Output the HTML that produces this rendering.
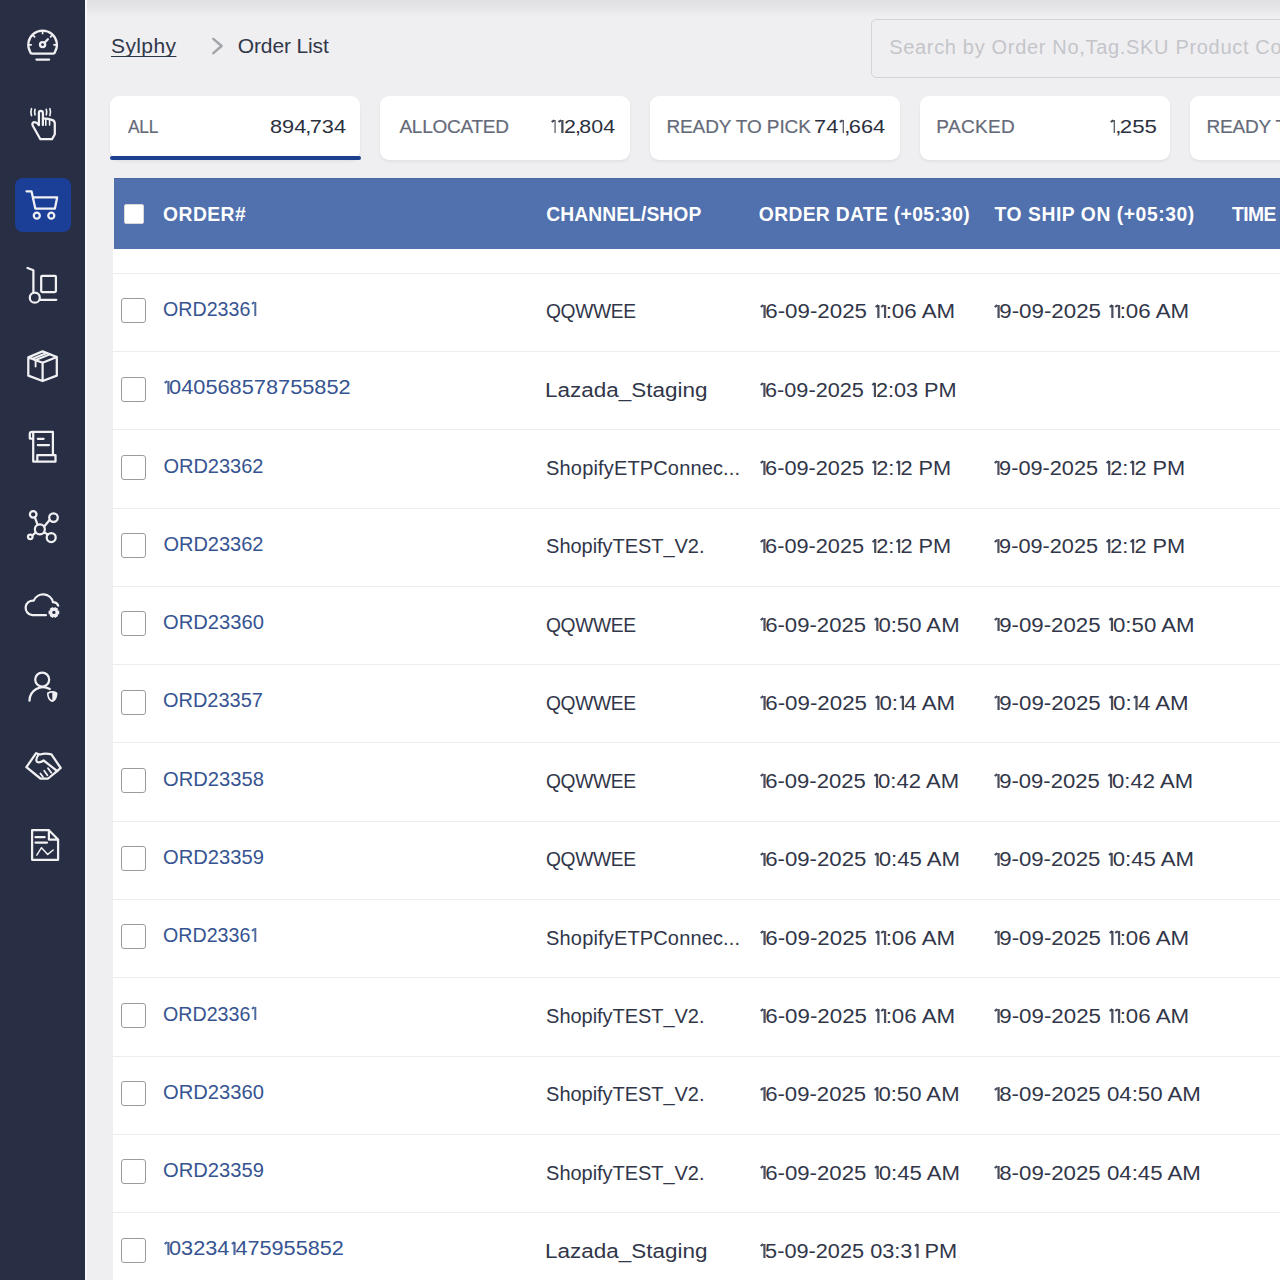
<!DOCTYPE html><html><head><meta charset="utf-8"><style>*{box-sizing:border-box;margin:0;padding:0}
html,body{width:1280px;height:1280px;overflow:hidden}
body{background:#efeff1;font-family:"Liberation Sans",sans-serif;position:relative}
.t{position:absolute;white-space:pre;transform-origin:0 0}
.abs{position:absolute}
.sb{position:absolute;left:0;top:0;width:85px;height:1280px;background:#282e43}
.sbedge{position:absolute;left:85px;top:0;width:2px;height:1280px;background:#f7f8fc}
.topshade{position:absolute;left:87px;top:0;width:1193px;height:17px;background:linear-gradient(#e1e1e3 0,#e2e2e4 4px,#efeff1 17px)}
.navact{position:absolute;left:14.5px;top:178px;width:56.5px;height:54px;border-radius:8px;background:#1b3e97}
.search{position:absolute;left:871px;top:19px;width:460px;height:59px;border:1.5px solid #d3d4d8;border-radius:5px}
.card{position:absolute;top:96px;width:250px;height:64px;background:#fff;border-radius:9px;box-shadow:0 1.5px 3px rgba(20,25,40,0.06)}
.tabbar{position:absolute;left:110px;top:155.5px;width:251px;height:4.5px;background:#1c3f8f;border-radius:3px}
.tbody{position:absolute;left:113px;top:249px;width:1167px;height:1031px;background:#fff}
.thead{position:absolute;left:114px;top:178px;width:1166px;height:71px;background:#5070ae;border-top:1px solid #4966a6}
.hcb{position:absolute;left:124px;top:204px;width:20px;height:19.5px;background:#fff;border-radius:2px;border:1px solid #d9d9d9}
.sep{position:absolute;left:113px;width:1167px;height:1px;background:#ededf0}
.cb{position:absolute;left:121px;width:25px;height:25px;border:1.5px solid #9b9b9b;border-radius:3px;background:#fff}
.cm{margin:0 -1.3px 0 -1px}.o{display:inline-block;white-space:pre;position:relative;-webkit-text-fill-color:transparent;-webkit-text-stroke:0 transparent;overflow:visible;vertical-align:baseline}.o::before{content:"";position:absolute;left:0.19em;top:0.1585em;width:0.09em;height:0.688em;background:currentColor;opacity:.88}.o::after{content:"";position:absolute;left:0.17em;top:0.166em;width:0.08em;height:0.17em;background:currentColor;transform:rotate(52deg);transform-origin:50% 0;opacity:.9}</style></head><body><div class="sb"></div><div class="sbedge"></div><div class="topshade"></div><div class="navact"></div><svg class="abs" style="left:0;top:0" width="85" height="900" viewBox="0 0 85 900" fill="none" stroke="#f1f1f4" stroke-width="2.25" stroke-linecap="round" stroke-linejoin="round">
<path d="M32.3 53.6 Q30.4 53.5 30.3 52.1 A14.3 14.3 0 1 1 54.9 52.1 Q54.8 53.5 52.9 53.6 Z"/>
<path d="M36.4 59.6 H49.1"/>
<circle cx="42.6" cy="44.6" r="2.6"/>
<path d="M44.5 42.7 L47.9 39.3"/>
<path d="M42.6 31.6 V33.4 M29.4 44.8 H31.2 M54 44.8 H55.8 M33.4 35.6 L34.6 36.8 M51.8 35.6 L50.6 36.8" stroke-width="1.8"/>
<path d="M38.9 125 V112.9 A2 2 0 0 1 42.9 112.9 V125"/>
<path d="M42.9 118.4 Q48.5 118.4 52.6 120.1 Q54.8 121 54.8 123.5 V134.3 L52 139.2 H40.4 L32.8 125.8 Q31.6 123.2 33.6 122.4 Q35.8 121.6 38.9 125"/>
<path d="M45.8 119 V125.2 M49.6 119.4 V125" stroke-width="1.6"/>
<path d="M31.5 108.7 Q30.2 112.1 31.5 115.5 M35 109.4 Q34.1 112.1 35 114.8 M46.3 109.4 Q47.2 112.1 46.3 114.8 M49.9 108.7 Q51.2 112.1 49.9 115.5" stroke-width="1.7"/>
<path d="M26.5 191.3 H31.5 L35.3 208.6 H54.9 L57.2 197.3 H33"/>
<circle cx="36.8" cy="215.7" r="3"/>
<circle cx="51.3" cy="215.7" r="3"/>
<path d="M27.5 268 L33.4 270.2 V292"/>
<circle cx="34.8" cy="297.7" r="5"/>
<path d="M40 299.8 H56.3"/>
<rect x="41.2" y="275.8" width="14.7" height="16.2" rx="1"/>
<path d="M42.6 351.4 L56.8 357 V375.6 L42.6 381 L28.3 375.6 V357.4 Z M28.3 357.4 L42.6 362.7 L56.8 357 M42.6 362.7 V381"/>
<path d="M32.6 358.6 L46.8 353 M35.6 360 L49.9 354.3 M35.6 360 V366.5" stroke-width="1.9"/>
<path d="M33.2 438.5 H29.8 V434 A2.2 2.2 0 0 1 32 431.8 H52.9 V454.5 M33.2 432 V461.5 H55.5 V455.2 H37.3 V461.5"/>
<path d="M37.8 438.8 H43.6 M37.8 445 H49"/>
<circle cx="39.85" cy="529.3" r="5"/>
<circle cx="33.2" cy="514.3" r="3.3"/>
<circle cx="53.5" cy="517.6" r="4.3"/>
<circle cx="30.3" cy="536.8" r="2.3"/>
<circle cx="51.2" cy="537.5" r="4.5"/>
<path d="M34.8 517.2 L37.6 524.8 M49.8 519.8 L44.2 526.5 M32.3 535.5 L35.5 532.6 M44.1 532.5 L48 534.4"/>
<path d="M45.9 615.2 H32.2 A7.3 7.3 0 0 1 33.7 600.6 A10.2 10.2 0 0 1 53 602.2 A5.5 5.5 0 0 1 58.2 605.6"/>
<path fill="#f1f1f4" stroke="none" fill-rule="evenodd" d="M57.40 610.26 L59.22 610.64 L59.22 614.16 L57.40 614.54 L57.50 614.36 L58.08 616.12 L55.03 617.88 L53.79 616.50 L54.01 616.50 L52.77 617.88 L49.72 616.12 L50.30 614.36 L50.40 614.54 L48.58 614.16 L48.58 610.64 L50.40 610.26 L50.30 610.44 L49.72 608.68 L52.77 606.92 L54.01 608.30 L53.79 608.30 L55.03 606.92 L58.08 608.68 L57.50 610.44 Z M55.60 612.40 A1.7 1.7 0 1 0 52.20 612.40 A1.7 1.7 0 1 0 55.60 612.40 Z"/>
<circle cx="42.2" cy="679.6" r="7"/>
<path d="M29.5 700.7 A13.5 13.5 0 0 1 49.8 689"/>
<path d="M47.8 693.2 Q52.3 690.6 56.6 693.2 Q56.6 699.2 52.3 701.2 Q47.8 699.2 47.8 693.2 Z" stroke-width="1.7"/>
<path d="M52.3 691.6 Q54.6 691.9 56.6 693.2 Q56.6 699.2 52.3 701.2 Z" fill="#f1f1f4" stroke="none"/>
<path d="M26.4 767.2 L36.1 753.2 L40 754.5 Q45 752.8 51.4 754.3 L60.7 768 L57.6 770.7 L48.2 778.5 H40.4 Z"/>
<path d="M38.5 754.5 Q35 760 37.2 762 Q40 763 43.6 760.5 L57.3 771.1"/>
<path d="M40.4 773.5 L43 777 M44.2 770.8 L47.4 775.2 M48 768.3 L51.3 772.8" stroke-width="1.8"/>
<path d="M32.1 830.2 H48.9 L58.1 839.5 V859.8 H32.1 Z M48.9 830.2 V839.5 H58.1"/>
<path d="M35.5 837.2 H44.6 M35.5 842.5 H47"/>
<path d="M36.8 855.2 L41.5 847.7 L47.7 854.4 L53.2 850" stroke-width="1.5"/>
</svg>
<svg class="abs" style="left:205px;top:30px" width="30" height="30"><path d="M8.3 8.8 L16.6 16 L8.3 23.2" fill="none" stroke="#a0a4ab" stroke-width="2.4" stroke-linecap="round" stroke-linejoin="round"/></svg><div class="search"></div><div class="card" style="left:110px"></div><div class="card" style="left:380px"></div><div class="card" style="left:650px"></div><div class="card" style="left:920px"></div><div class="card" style="left:1190px"></div><div class="tabbar"></div><div class="tbody"></div><div class="thead"></div><div class="hcb"></div><div class="sep" style="top:272.80px"></div><div class="sep" style="top:351.08px"></div><div class="sep" style="top:429.36px"></div><div class="sep" style="top:507.64px"></div><div class="sep" style="top:585.92px"></div><div class="sep" style="top:664.20px"></div><div class="sep" style="top:742.48px"></div><div class="sep" style="top:820.76px"></div><div class="sep" style="top:899.04px"></div><div class="sep" style="top:977.32px"></div><div class="sep" style="top:1055.60px"></div><div class="sep" style="top:1133.88px"></div><div class="sep" style="top:1212.16px"></div><div class="cb" style="top:298.24px"></div><div class="cb" style="top:376.52px"></div><div class="cb" style="top:454.80px"></div><div class="cb" style="top:533.08px"></div><div class="cb" style="top:611.36px"></div><div class="cb" style="top:689.64px"></div><div class="cb" style="top:767.92px"></div><div class="cb" style="top:846.20px"></div><div class="cb" style="top:924.48px"></div><div class="cb" style="top:1002.76px"></div><div class="cb" style="top:1081.04px"></div><div class="cb" style="top:1159.32px"></div><div class="cb" style="top:1237.60px"></div><div class="t" style="left:111.00px;top:35.47px;font-size:21px;line-height:21px;color:#30364a;font-weight:400;letter-spacing:0.400px;text-decoration:underline;text-underline-offset:2.5px;text-decoration-thickness:1.2px;text-decoration-skip-ink:none;">Sylphy</div><div class="t" style="left:237.80px;top:35.17px;font-size:21px;line-height:21px;color:#31374a;font-weight:400;letter-spacing:-0.134px;">Order List</div><div class="t" style="left:889.20px;top:37.43px;font-size:20px;line-height:20px;color:#c4c5ca;font-weight:400;letter-spacing:0.680px;">Search by Order No,Tag.SKU Product Code</div><div class="t" style="left:128.40px;top:116.99px;font-size:19px;line-height:19px;color:#656a79;font-weight:400;letter-spacing:-0.350px;transform:scaleX(0.9156);-webkit-text-stroke:0.2px #656a79;">ALL</div><div class="t" style="left:269.60px;top:116.99px;font-size:19px;line-height:19px;color:#2b3040;font-weight:400;letter-spacing:0.000px;transform:scaleX(1.1446);">894<span class="cm">,</span>734</div><div class="t" style="left:399.40px;top:116.99px;font-size:19px;line-height:19px;color:#656a79;font-weight:400;letter-spacing:-0.250px;-webkit-text-stroke:0.2px #656a79;">ALLOCATED</div><div class="t" style="left:550.00px;top:116.99px;font-size:19px;line-height:19px;color:#2b3040;font-weight:400;letter-spacing:0.000px;transform:scaleX(1.1253);"><span class="o" style="width:6.27px">1</span><span class="o" style="width:6.27px">1</span>2<span class="cm">,</span>804</div><div class="t" style="left:666.40px;top:116.99px;font-size:19px;line-height:19px;color:#656a79;font-weight:400;letter-spacing:-0.100px;-webkit-text-stroke:0.2px #656a79;">READY TO PICK</div><div class="t" style="left:814.00px;top:116.99px;font-size:19px;line-height:19px;color:#2b3040;font-weight:400;letter-spacing:0.000px;transform:scaleX(1.1475);">74<span class="o" style="width:6.27px">1</span><span class="cm">,</span>664</div><div class="t" style="left:936.30px;top:116.99px;font-size:19px;line-height:19px;color:#656a79;font-weight:400;letter-spacing:0.360px;-webkit-text-stroke:0.2px #656a79;">PACKED</div><div class="t" style="left:1108.50px;top:116.99px;font-size:19px;line-height:19px;color:#2b3040;font-weight:400;letter-spacing:0.000px;transform:scaleX(1.1718);"><span class="o" style="width:6.27px">1</span><span class="cm">,</span>255</div><div class="t" style="left:1206.40px;top:116.99px;font-size:19px;line-height:19px;color:#656a79;font-weight:400;letter-spacing:-0.150px;-webkit-text-stroke:0.2px #656a79;">READY TO SHIP</div><div class="t" style="left:1379.00px;top:116.99px;font-size:19px;line-height:19px;color:#2b3040;font-weight:400;letter-spacing:0.000px;"><span class="o" style="width:6.27px">1</span>2<span class="cm">,</span>345</div><div class="t" style="left:163.10px;top:205.04px;font-size:19.3px;line-height:19.3px;color:#ffffff;font-weight:700;letter-spacing:0.440px;">ORDER#</div><div class="t" style="left:546.20px;top:205.04px;font-size:19.3px;line-height:19.3px;color:#ffffff;font-weight:700;letter-spacing:0.074px;">CHANNEL/SHOP</div><div class="t" style="left:758.80px;top:205.04px;font-size:19.3px;line-height:19.3px;color:#ffffff;font-weight:700;letter-spacing:0.333px;">ORDER DATE (+05:30)</div><div class="t" style="left:994.50px;top:205.04px;font-size:19.3px;line-height:19.3px;color:#ffffff;font-weight:700;letter-spacing:0.566px;">TO SHIP ON (+05:30)</div><div class="t" style="left:1232.00px;top:205.04px;font-size:19.3px;line-height:19.3px;color:#ffffff;font-weight:700;letter-spacing:-0.600px;">TIME SLOT</div><div class="t" style="left:163.40px;top:299.07px;font-size:20px;line-height:20px;color:#365491;font-weight:400;letter-spacing:0.000px;transform:scaleX(0.9819);">ORD2336<span class="o" style="width:5.60px">1</span></div><div class="t" style="left:546.10px;top:301.47px;font-size:20px;line-height:20px;color:#313649;font-weight:400;letter-spacing:-0.350px;transform:scaleX(0.9609);">QQWWEE</div><div class="t" style="left:759.00px;top:301.47px;font-size:20px;line-height:20px;color:#313649;font-weight:400;letter-spacing:0.000px;transform:scaleX(1.1156);"><span class="o" style="width:5.60px">1</span>6-09-2025 <span class="o" style="width:5.60px">1</span><span class="o" style="width:5.60px">1</span>:06 AM</div><div class="t" style="left:993.40px;top:301.47px;font-size:20px;line-height:20px;color:#313649;font-weight:400;letter-spacing:0.000px;transform:scaleX(1.1156);"><span class="o" style="width:5.60px">1</span>9-09-2025 <span class="o" style="width:5.60px">1</span><span class="o" style="width:5.60px">1</span>:06 AM</div><div class="t" style="left:163.40px;top:377.35px;font-size:20px;line-height:20px;color:#365491;font-weight:400;letter-spacing:0.000px;transform:scaleX(1.0882);"><span class="o" style="width:5.60px">1</span>040568578755852</div><div class="t" style="left:545.10px;top:379.75px;font-size:20px;line-height:20px;color:#313649;font-weight:400;letter-spacing:0.000px;transform:scaleX(1.1235);">Lazada_Staging</div><div class="t" style="left:759.00px;top:379.75px;font-size:20px;line-height:20px;color:#313649;font-weight:400;letter-spacing:0.000px;transform:scaleX(1.0833);"><span class="o" style="width:5.60px">1</span>6-09-2025 <span class="o" style="width:5.60px">1</span>2:03 PM</div><div class="t" style="left:163.40px;top:455.63px;font-size:20px;line-height:20px;color:#365491;font-weight:400;letter-spacing:0.000px;">ORD23362</div><div class="t" style="left:546.10px;top:458.03px;font-size:20px;line-height:20px;color:#313649;font-weight:400;letter-spacing:0.155px;">ShopifyETPConnec...</div><div class="t" style="left:759.00px;top:458.03px;font-size:20px;line-height:20px;color:#313649;font-weight:400;letter-spacing:0.000px;transform:scaleX(1.0862);"><span class="o" style="width:5.60px">1</span>6-09-2025 <span class="o" style="width:5.60px">1</span>2:<span class="o" style="width:5.60px">1</span>2 PM</div><div class="t" style="left:993.40px;top:458.03px;font-size:20px;line-height:20px;color:#313649;font-weight:400;letter-spacing:0.000px;transform:scaleX(1.0862);"><span class="o" style="width:5.60px">1</span>9-09-2025 <span class="o" style="width:5.60px">1</span>2:<span class="o" style="width:5.60px">1</span>2 PM</div><div class="t" style="left:163.40px;top:533.91px;font-size:20px;line-height:20px;color:#365491;font-weight:400;letter-spacing:0.000px;">ORD23362</div><div class="t" style="left:546.10px;top:536.31px;font-size:20px;line-height:20px;color:#313649;font-weight:400;letter-spacing:-0.043px;">ShopifyTEST_V2.</div><div class="t" style="left:759.00px;top:536.31px;font-size:20px;line-height:20px;color:#313649;font-weight:400;letter-spacing:0.000px;transform:scaleX(1.0862);"><span class="o" style="width:5.60px">1</span>6-09-2025 <span class="o" style="width:5.60px">1</span>2:<span class="o" style="width:5.60px">1</span>2 PM</div><div class="t" style="left:993.40px;top:536.31px;font-size:20px;line-height:20px;color:#313649;font-weight:400;letter-spacing:0.000px;transform:scaleX(1.0862);"><span class="o" style="width:5.60px">1</span>9-09-2025 <span class="o" style="width:5.60px">1</span>2:<span class="o" style="width:5.60px">1</span>2 PM</div><div class="t" style="left:163.40px;top:612.19px;font-size:20px;line-height:20px;color:#365491;font-weight:400;letter-spacing:0.000px;transform:scaleX(1.0082);">ORD23360</div><div class="t" style="left:546.10px;top:614.59px;font-size:20px;line-height:20px;color:#313649;font-weight:400;letter-spacing:-0.350px;transform:scaleX(0.9609);">QQWWEE</div><div class="t" style="left:759.00px;top:614.59px;font-size:20px;line-height:20px;color:#313649;font-weight:400;letter-spacing:0.000px;transform:scaleX(1.1061);"><span class="o" style="width:5.60px">1</span>6-09-2025 <span class="o" style="width:5.60px">1</span>0:50 AM</div><div class="t" style="left:993.40px;top:614.59px;font-size:20px;line-height:20px;color:#313649;font-weight:400;letter-spacing:0.000px;transform:scaleX(1.1117);"><span class="o" style="width:5.60px">1</span>9-09-2025 <span class="o" style="width:5.60px">1</span>0:50 AM</div><div class="t" style="left:163.40px;top:690.47px;font-size:20px;line-height:20px;color:#365491;font-weight:400;letter-spacing:0.000px;transform:scaleX(0.998);">ORD23357</div><div class="t" style="left:546.10px;top:692.87px;font-size:20px;line-height:20px;color:#313649;font-weight:400;letter-spacing:-0.350px;transform:scaleX(0.9609);">QQWWEE</div><div class="t" style="left:759.00px;top:692.87px;font-size:20px;line-height:20px;color:#313649;font-weight:400;letter-spacing:0.000px;transform:scaleX(1.1156);"><span class="o" style="width:5.60px">1</span>6-09-2025 <span class="o" style="width:5.60px">1</span>0:<span class="o" style="width:5.60px">1</span>4 AM</div><div class="t" style="left:993.40px;top:692.87px;font-size:20px;line-height:20px;color:#313649;font-weight:400;letter-spacing:0.000px;transform:scaleX(1.1127);"><span class="o" style="width:5.60px">1</span>9-09-2025 <span class="o" style="width:5.60px">1</span>0:<span class="o" style="width:5.60px">1</span>4 AM</div><div class="t" style="left:163.40px;top:768.75px;font-size:20px;line-height:20px;color:#365491;font-weight:400;letter-spacing:0.000px;transform:scaleX(1.0082);">ORD23358</div><div class="t" style="left:546.10px;top:771.15px;font-size:20px;line-height:20px;color:#313649;font-weight:400;letter-spacing:-0.350px;transform:scaleX(0.9609);">QQWWEE</div><div class="t" style="left:759.00px;top:771.15px;font-size:20px;line-height:20px;color:#313649;font-weight:400;letter-spacing:0.000px;transform:scaleX(1.1034);"><span class="o" style="width:5.60px">1</span>6-09-2025 <span class="o" style="width:5.60px">1</span>0:42 AM</div><div class="t" style="left:993.40px;top:771.15px;font-size:20px;line-height:20px;color:#313649;font-weight:400;letter-spacing:0.000px;transform:scaleX(1.1034);"><span class="o" style="width:5.60px">1</span>9-09-2025 <span class="o" style="width:5.60px">1</span>0:42 AM</div><div class="t" style="left:163.40px;top:847.03px;font-size:20px;line-height:20px;color:#365491;font-weight:400;letter-spacing:0.000px;transform:scaleX(1.0082);">ORD23359</div><div class="t" style="left:546.10px;top:849.43px;font-size:20px;line-height:20px;color:#313649;font-weight:400;letter-spacing:-0.350px;transform:scaleX(0.9609);">QQWWEE</div><div class="t" style="left:759.00px;top:849.43px;font-size:20px;line-height:20px;color:#313649;font-weight:400;letter-spacing:0.000px;transform:scaleX(1.1089);"><span class="o" style="width:5.60px">1</span>6-09-2025 <span class="o" style="width:5.60px">1</span>0:45 AM</div><div class="t" style="left:993.40px;top:849.43px;font-size:20px;line-height:20px;color:#313649;font-weight:400;letter-spacing:0.000px;transform:scaleX(1.1089);"><span class="o" style="width:5.60px">1</span>9-09-2025 <span class="o" style="width:5.60px">1</span>0:45 AM</div><div class="t" style="left:163.40px;top:925.31px;font-size:20px;line-height:20px;color:#365491;font-weight:400;letter-spacing:0.000px;transform:scaleX(0.9819);">ORD2336<span class="o" style="width:5.60px">1</span></div><div class="t" style="left:546.10px;top:927.71px;font-size:20px;line-height:20px;color:#313649;font-weight:400;letter-spacing:0.155px;">ShopifyETPConnec...</div><div class="t" style="left:759.00px;top:927.71px;font-size:20px;line-height:20px;color:#313649;font-weight:400;letter-spacing:0.000px;transform:scaleX(1.1156);"><span class="o" style="width:5.60px">1</span>6-09-2025 <span class="o" style="width:5.60px">1</span><span class="o" style="width:5.60px">1</span>:06 AM</div><div class="t" style="left:993.40px;top:927.71px;font-size:20px;line-height:20px;color:#313649;font-weight:400;letter-spacing:0.000px;transform:scaleX(1.1156);"><span class="o" style="width:5.60px">1</span>9-09-2025 <span class="o" style="width:5.60px">1</span><span class="o" style="width:5.60px">1</span>:06 AM</div><div class="t" style="left:163.40px;top:1003.59px;font-size:20px;line-height:20px;color:#365491;font-weight:400;letter-spacing:0.000px;transform:scaleX(0.9819);">ORD2336<span class="o" style="width:5.60px">1</span></div><div class="t" style="left:546.10px;top:1005.99px;font-size:20px;line-height:20px;color:#313649;font-weight:400;letter-spacing:-0.043px;">ShopifyTEST_V2.</div><div class="t" style="left:759.00px;top:1005.99px;font-size:20px;line-height:20px;color:#313649;font-weight:400;letter-spacing:0.000px;transform:scaleX(1.1156);"><span class="o" style="width:5.60px">1</span>6-09-2025 <span class="o" style="width:5.60px">1</span><span class="o" style="width:5.60px">1</span>:06 AM</div><div class="t" style="left:993.40px;top:1005.99px;font-size:20px;line-height:20px;color:#313649;font-weight:400;letter-spacing:0.000px;transform:scaleX(1.1156);"><span class="o" style="width:5.60px">1</span>9-09-2025 <span class="o" style="width:5.60px">1</span><span class="o" style="width:5.60px">1</span>:06 AM</div><div class="t" style="left:163.40px;top:1081.87px;font-size:20px;line-height:20px;color:#365491;font-weight:400;letter-spacing:0.000px;transform:scaleX(1.0082);">ORD23360</div><div class="t" style="left:546.10px;top:1084.27px;font-size:20px;line-height:20px;color:#313649;font-weight:400;letter-spacing:-0.043px;">ShopifyTEST_V2.</div><div class="t" style="left:759.00px;top:1084.27px;font-size:20px;line-height:20px;color:#313649;font-weight:400;letter-spacing:0.000px;transform:scaleX(1.1061);"><span class="o" style="width:5.60px">1</span>6-09-2025 <span class="o" style="width:5.60px">1</span>0:50 AM</div><div class="t" style="left:993.40px;top:1084.27px;font-size:20px;line-height:20px;color:#313649;font-weight:400;letter-spacing:0.000px;transform:scaleX(1.1128);"><span class="o" style="width:5.60px">1</span>8-09-2025 04:50 AM</div><div class="t" style="left:163.40px;top:1160.15px;font-size:20px;line-height:20px;color:#365491;font-weight:400;letter-spacing:0.000px;transform:scaleX(1.0082);">ORD23359</div><div class="t" style="left:546.10px;top:1162.55px;font-size:20px;line-height:20px;color:#313649;font-weight:400;letter-spacing:-0.043px;">ShopifyTEST_V2.</div><div class="t" style="left:759.00px;top:1162.55px;font-size:20px;line-height:20px;color:#313649;font-weight:400;letter-spacing:0.000px;transform:scaleX(1.1089);"><span class="o" style="width:5.60px">1</span>6-09-2025 <span class="o" style="width:5.60px">1</span>0:45 AM</div><div class="t" style="left:993.40px;top:1162.55px;font-size:20px;line-height:20px;color:#313649;font-weight:400;letter-spacing:0.000px;transform:scaleX(1.1128);"><span class="o" style="width:5.60px">1</span>8-09-2025 04:45 AM</div><div class="t" style="left:163.40px;top:1238.43px;font-size:20px;line-height:20px;color:#365491;font-weight:400;letter-spacing:0.000px;transform:scaleX(1.0836);"><span class="o" style="width:5.60px">1</span>03234<span class="o" style="width:5.60px">1</span>475955852</div><div class="t" style="left:545.10px;top:1240.83px;font-size:20px;line-height:20px;color:#313649;font-weight:400;letter-spacing:0.000px;transform:scaleX(1.1235);">Lazada_Staging</div><div class="t" style="left:759.00px;top:1240.83px;font-size:20px;line-height:20px;color:#313649;font-weight:400;letter-spacing:0.000px;transform:scaleX(1.0861);"><span class="o" style="width:5.60px">1</span>5-09-2025 03:3<span class="o" style="width:5.60px">1</span> PM</div></body></html>
